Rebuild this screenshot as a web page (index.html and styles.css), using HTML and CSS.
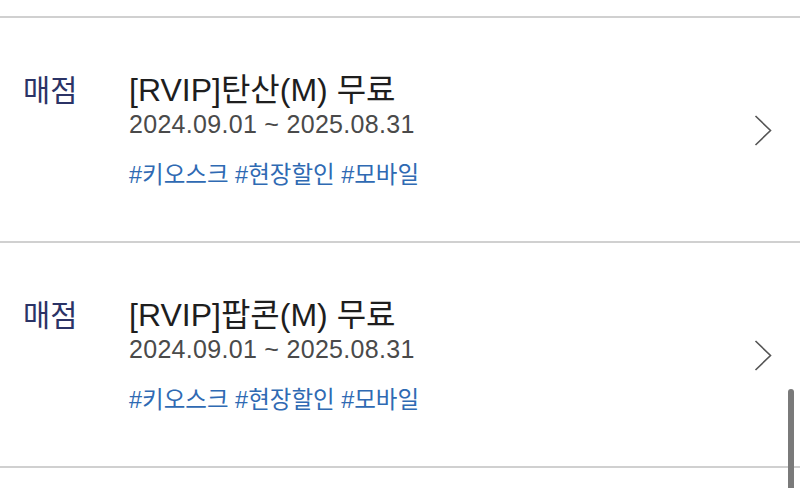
FILE: index.html
```html
<!DOCTYPE html>
<html lang="ko">
<head>
<meta charset="utf-8">
<link rel="stylesheet" href="styles.css">
</head>
<body>
<div class="list">
  <div class="row">
    <div class="content">
      <div class="cat">매점</div>
      <div class="main">
        <div class="title">[RVIP]탄산(M) 무료</div>
        <div class="date">2024.09.01 ~ 2025.08.31</div>
        <div class="tags">#키오스크 #현장할인 #모바일</div>
      </div>
    </div>
    <svg class="chev" viewBox="0 0 18 32" width="18" height="32"><polyline points="1.5,2 16.5,16.5 1.5,31" fill="none" stroke="#555" stroke-width="1.6"/></svg>
  </div>
  <div class="row">
    <div class="content">
      <div class="cat">매점</div>
      <div class="main">
        <div class="title">[RVIP]팝콘(M) 무료</div>
        <div class="date">2024.09.01 ~ 2025.08.31</div>
        <div class="tags">#키오스크 #현장할인 #모바일</div>
      </div>
    </div>
    <svg class="chev" viewBox="0 0 18 32" width="18" height="32"><polyline points="1.5,2 16.5,16.5 1.5,31" fill="none" stroke="#555" stroke-width="1.6"/></svg>
  </div>
</div>
<div class="scrollbar"></div>
</body>
</html>
```
FILE: styles.css
```css
html, body {
  margin: 0;
  padding: 0;
  background: #fff;
  width: 800px;
  height: 488px;
  overflow: hidden;
  font-family: "Liberation Sans", "Noto Sans CJK KR", sans-serif;
}
.list {
  margin-top: 16px;
  border-top: 2px solid #d0d0d0;
}
.row {
  display: flex;
  height: 223px;
  border-bottom: 2px solid #d0d0d0;
}
.content {
  flex: 1;
  display: flex;
  align-items: baseline;
  align-self: flex-start;
  padding-top: 54px;
  padding-left: 23px;
}
.cat {
  width: 106px;
  font-size: 29.5px;
  line-height: 36px;
  color: #2b3366;
}
.main {
  display: flex;
  flex-direction: column;
}
.title {
  font-size: 32px;
  line-height: 36px;
  color: #1e1e1e;
}
.date {
  margin-top: 1px;
  font-size: 25px;
  line-height: 30px;
  color: #4a4a4a;
  letter-spacing: 0.3px;
}
.tags {
  margin-top: 21px;
  font-size: 23.5px;
  line-height: 30px;
  color: #2f6ab3;
}
.chev {
  align-self: center;
  margin-right: 28px;
  margin-top: 0;
}
.scrollbar {
  position: absolute;
  left: 788px;
  top: 389px;
  width: 6px;
  height: 120px;
  border-radius: 3px;
  background: #7a7a7a;
}
```
